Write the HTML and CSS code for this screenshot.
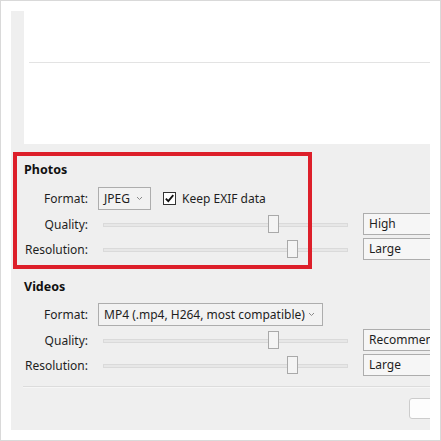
FILE: index.html
```html
<!DOCTYPE html>
<html>
<head>
<meta charset="utf-8">
<link rel="stylesheet" href="styles.css">
</head>
<body>
<div class="frame">
  <div class="panel">
    <div class="preview"><div class="preview-line"></div></div>
    <div class="settings">
      <div class="heading">Photos</div>
      <div class="row row-format">
        <span class="label">Format:</span>
        <div class="select select-photo"><span>JPEG</span><svg class="chev" width="7" height="5" viewBox="0 0 7 5"><path d="M1 1 L3.5 3.5 L6 1" fill="none" stroke="#8a8a8a" stroke-width="1"/></svg></div>
        <div class="check"><span class="box"><svg width="11" height="11" viewBox="0 0 11 11"><path d="M1.8 5.6 L4.3 8.2 L9.3 2.2" fill="none" stroke="#111" stroke-width="1.8"/></svg></span><span>Keep EXIF data</span></div>
      </div>
      <div class="row">
        <span class="label">Quality:</span>
        <div class="slider"><div class="track"></div><div class="thumb" style="left:165px"></div></div>
        <div class="combo">High</div>
      </div>
      <div class="row">
        <span class="label">Resolution:</span>
        <div class="slider"><div class="track"></div><div class="thumb" style="left:184px"></div></div>
        <div class="combo">Large</div>
      </div>

      <div class="heading heading-videos">Videos</div>
      <div class="row row-format">
        <span class="label">Format:</span>
        <div class="select select-video"><span>MP4 (.mp4, H264, most compatible)</span><svg class="chev" width="7" height="5" viewBox="0 0 7 5"><path d="M1 1 L3.5 3.5 L6 1" fill="none" stroke="#8a8a8a" stroke-width="1"/></svg></div>
      </div>
      <div class="row">
        <span class="label">Quality:</span>
        <div class="slider"><div class="track"></div><div class="thumb" style="left:165px"></div></div>
        <div class="combo">Recommended</div>
      </div>
      <div class="row">
        <span class="label">Resolution:</span>
        <div class="slider"><div class="track"></div><div class="thumb" style="left:184px"></div></div>
        <div class="combo">Large</div>
      </div>
    </div>
    <div class="separator"></div>
    <div class="footer"><div class="button"></div></div>
    <div class="highlight"></div>
  </div>
</div>
</body>
</html>
```
FILE: styles.css
```css
html, body {
  margin: 0;
  padding: 0;
  background: #ffffff;
}
.frame {
  box-sizing: border-box;
  width: 441px;
  height: 441px;
  border: 1px solid #d9d9d9;
  background: #ffffff;
  padding: 10px;
  font-family: "Noto Sans", "Open Sans", sans-serif;
  font-size: 12px;
  color: #1e1e1e;
}
.panel {
  position: relative;
  width: 419px;
  height: 419px;
  background: #efefef;
  overflow: hidden;
}
.preview {
  margin-left: 13px;
  height: 133px;
  background: #ffffff;
  padding-top: 51px;
  padding-left: 5px;
  box-sizing: border-box;
}
.preview-line {
  height: 1px;
  background: #e3e3e3;
}
.settings {
  padding: 16px 0 0 12px;
}
.heading {
  height: 20px;
  line-height: 20px;
  font-weight: bold;
  font-size: 12.5px;
  padding-left: 1px;
  margin-bottom: 6px;
  color: #111;
}
.heading-videos {
  margin-top: 16px;
  margin-bottom: 5px;
}
.row {
  display: flex;
  align-items: center;
  height: 24px;
  margin-bottom: 1px;
  white-space: nowrap;
}
.row-format {
  height: 25px;
}
.label {
  width: 65px;
  text-align: right;
  margin-right: 10px;
  flex-shrink: 0;
}
.select {
  box-sizing: border-box;
  height: 23px;
  border: 1px solid #adadad;
  background: #f2f2f2;
  display: flex;
  align-items: center;
  padding-left: 5px;
  flex-shrink: 0;
}
.select-photo {
  width: 53px;
}
.select-video {
  width: 225px;
}
.select span {
  flex: 1;
}
.chev {
  margin-right: 7px;
}
.check {
  display: flex;
  align-items: center;
  margin-left: 12px;
}
.box {
  box-sizing: border-box;
  width: 13px;
  height: 13px;
  border: 1px solid #333;
  background: #fff;
  display: flex;
  align-items: center;
  justify-content: center;
  margin-right: 6px;
}
.box svg {
  display: block;
}
.slider {
  position: relative;
  width: 245px;
  height: 22px;
  margin-left: 5px;
  margin-right: 15px;
  flex-shrink: 0;
}
.track {
  position: absolute;
  left: 0;
  right: 0;
  top: 10px;
  height: 2px;
  background: #e7e7e7;
  border: 1px solid #dadada;
}
.thumb {
  position: absolute;
  top: 2px;
  width: 11px;
  height: 18px;
  box-sizing: border-box;
  border: 1px solid #a9a9a9;
  background: #f4f4f4;
}
.combo {
  box-sizing: border-box;
  width: 110px;
  height: 22px;
  border: 1px solid #adadad;
  background: #f6f6f6;
  line-height: 20px;
  padding-left: 5px;
  flex-shrink: 0;
}
.separator {
  margin: 9px 0 0 12px;
  height: 1px;
  background: #dcdcdc;
  border-bottom: 1px solid #f6f6f6;
}
.footer {
  padding: 10px 0 0 398px;
}
.button {
  box-sizing: border-box;
  width: 75px;
  height: 21px;
  background: #fdfdfd;
  border: 1px solid #cccccc;
  border-radius: 3px;
}
.highlight {
  position: absolute;
  left: 2px;
  top: 141px;
  width: 299px;
  height: 117px;
  box-sizing: border-box;
  border: 4px solid #dd1f2a;
}
```
